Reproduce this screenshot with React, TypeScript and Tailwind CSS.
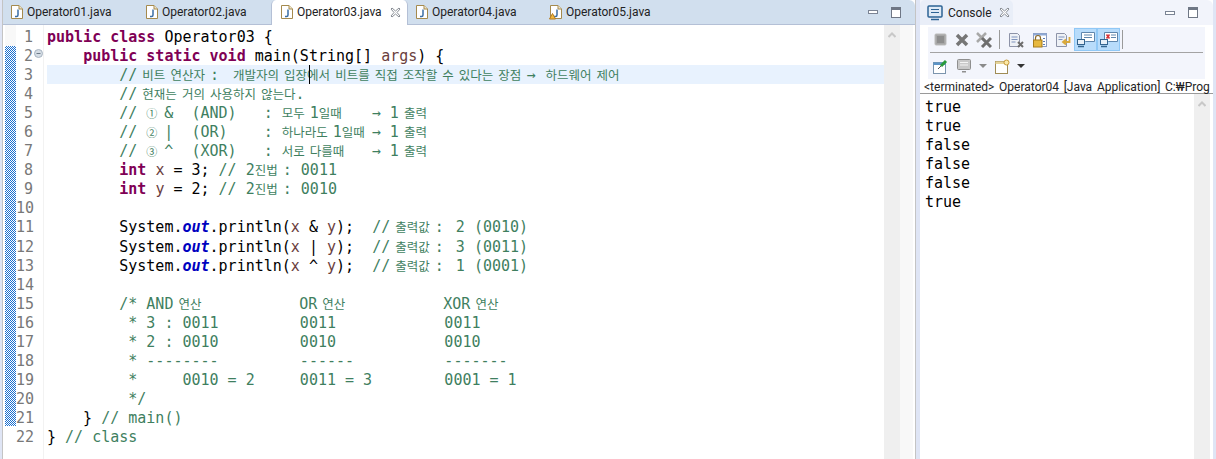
import React from 'react';

const KW = 'font-bold text-[#7f0055]';
const CM = 'text-[#3f7f5f]';
const VAR = 'text-[#6a3e3e]';
const OUT = 'font-bold italic text-[#0000c0]';
const TXT = 'text-[#000000]';
const NUM = 'text-[#3f7f5f] inline-block w-[9px] text-[11px]';
const DESC = 'text-[#3f7f5f] inline-block ml-[9px] w-[90px]';
const VAL = 'text-[#3f7f5f] ml-[3px]';

type Seg = [string, string];

const lines: Seg[][] = [
    [['public class', KW], [' Operator03 {', TXT]],
    [['    ', TXT], ['public static void', KW], [' main(String[] ', TXT], ['args', VAR], [') {', TXT]],
    [['        // 비트 연산자 :  개발자의 입장에서 비트를 직접 조작할 수 있다는 장점 →  하드웨어 제어', CM]],
    [['        // 현재는 거의 사용하지 않는다.', CM]],
    [['        // ', CM], ['①', NUM], [' &  (AND)   :', CM], ['모두 1일때', DESC], ['→ 1 출력', CM]],
    [['        // ', CM], ['②', NUM], [' |  (OR)    :', CM], ['하나라도 1일때', DESC], ['→ 1 출력', CM]],
    [['        // ', CM], ['③', NUM], [' ^  (XOR)   :', CM], ['서로 다를때', DESC], ['→ 1 출력', CM]],
    [['        ', TXT], ['int', KW], [' ', TXT], ['x', VAR], [' = 3; ', TXT], ['// 2진법 : 0011', CM]],
    [['        ', TXT], ['int', KW], [' ', TXT], ['y', VAR], [' = 2; ', TXT], ['// 2진법 : 0010', CM]],
    [],
    [['        System.', TXT], ['out', OUT], ['.println(', TXT], ['x', VAR], [' & ', TXT], ['y', VAR], [');  ', TXT], ['// 출력값 :', CM], [' 2 (0010)', VAL]],
    [['        System.', TXT], ['out', OUT], ['.println(', TXT], ['x', VAR], [' | ', TXT], ['y', VAR], [');  ', TXT], ['// 출력값 :', CM], [' 3 (0011)', VAL]],
    [['        System.', TXT], ['out', OUT], ['.println(', TXT], ['x', VAR], [' ^ ', TXT], ['y', VAR], [');  ', TXT], ['// 출력값 :', CM], [' 1 (0001)', VAL]],
    [],
    [['        ', TXT], ['/* AND 연산', 'text-[#3f7f5f] inline-block w-[180px]'], ['OR 연산', 'text-[#3f7f5f] inline-block w-[144px]'], ['XOR 연산', CM]],
    [['         * 3 : 0011         0011            0011', CM]],
    [['         * 2 : 0010         0010            0010', CM]],
    [['         * --------         ------          -------', CM]],
    [['         *     0010 = 2     0011 = 3        0001 = 1', CM]],
    [['         */', CM]],
    [['    } ', TXT], ['// main()', CM]],
    [['} ', TXT], ['// class', CM]],
];

const HANGUL = /[\uac00-\ud7a3]/;
// spaces next to hangul are narrow in the fallback font
const NARROW = /((?<=[\uac00-\ud7a3]) |(?<=→) (?= )| (?=[\uac00-\ud7a3]))/;

const Hangul: React.FC<{ text: string }> = ({ text }) => {
    const parts = HANGUL.test(text) ? text.split(NARROW) : [text];
    return (
        <>
            {parts.map((part, i) =>
                i % 2 === 1 ? (
                    <span key={i} className="tracking-[-4px]">{part}</span>
                ) : (
                    part.split(/([\uac00-\ud7a3]+)/).map((run, j) =>
                        j % 2 === 1 ? (
                            <span key={j} className="text-[12.5px]">{run}</span>
                        ) : (
                            <span key={j}>{run}</span>
                        ),
                    )
                ),
            )}
        </>
    );
};

const JavaFile: React.FC<{ warn?: boolean }> = ({ warn }) => (
    <svg width="14" height="16" viewBox="0 0 14 16" className="shrink-0">
        <path d="M1.5 1.5h7.5l3.500 3.500v9.500h-11z" fill="#fff" stroke="#a58a4e" />
        <path d="M9 1.500v3.500h3.500" fill="#f1e7c8" stroke="#a58a4e" />
        <path d="M8 5.500v5.500q0 1.500-1.500 1.500h-1.500" fill="none" stroke="#3a6ea5" strokeWidth="1.500" />
        {warn && <path d="M3.500 9.500l3 5.500h-6z" fill="#f0b840" stroke="#b57b1e" />}
    </svg>
);

const CloseX: React.FC = () => (
    <svg width="11" height="11" viewBox="0 0 11 11" className="shrink-0">
        <path d="M1 2l1-1 3.500 3 3.500-3 1 1-3 3.500 3 3.500-1 1-3.500-3-3.500 3-1-1 3-3.500z" fill="#fff" stroke="#8a8f96" />
    </svg>
);

const WindowControls: React.FC = () => (
    <div className="flex items-center gap-[13px]">
        <div className="h-[4px] w-[10px] border border-[#7b8494] bg-white" />
        <div className="h-[11px] w-[10px] border border-[#6f7785] border-t-[3px] bg-white" />
    </div>
);

const EditorTab: React.FC<{ name: string; width: string; warn?: boolean }> = ({ name, width, warn }) => (
    <div className={`flex items-center gap-[3px] pl-[7px] ${width}`}>
        <JavaFile warn={warn} />
        <span className="text-[12px] text-[#222]">{name}</span>
    </div>
);

const Chevron: React.FC = () => (
    <svg width="8" height="6" viewBox="0 0 8 6">
        <path d="M0.500 5l3.500-3.500 3.500 3.500" fill="none" stroke="#c8c8c8" strokeWidth="2" />
    </svg>
);

const Tool: React.FC<{ children: React.ReactNode; width: string; on?: boolean }> = ({ children, width, on }) => (
    <div className={`flex h-[23px] items-center justify-center ${width} ${on ? 'border border-[#90c8f6] bg-[#b8dcfb]' : ''}`}>
        {children}
    </div>
);

const Divider: React.FC<{ className: string }> = ({ className }) => <div className={`h-[19px] w-[1px] bg-[#9a9a9a] ${className}`} />;

const StopIcon = () => (
    <svg width="13" height="13" viewBox="0 0 13 13"><rect x="1" y="1" width="11" height="11" rx="1" fill="#a6a6a6" stroke="#bdbdbd" /><rect x="3" y="3" width="7" height="7" fill="#8e8e8e" /></svg>
);
const GreyX = () => (
    <svg width="14" height="14" viewBox="0 0 14 14"><path d="M2 2l10 10M12 2l-10 10" stroke="#767676" strokeWidth="3.500" /></svg>
);
const GreyXX = () => (
    <svg width="16" height="16" viewBox="0 0 16 16">
        <path d="M1 1l9 9M10 1l-9 9" stroke="#a8a8a8" strokeWidth="2.500" />
        <path d="M6 6l9 9M15 6l-9 9" stroke="#6f6f6f" strokeWidth="3" />
    </svg>
);
const DocX = () => (
    <svg width="16" height="16" viewBox="0 0 16 16">
        <path d="M1.500 1.500h8l2 2v11h-10z" fill="#eef1f6" stroke="#8d93a8" />
        <path d="M3.500 5h6M3.500 7.500h6M3.500 10h4" stroke="#7f93bd" />
        <path d="M10 10l5 5M15 10l-5 5" stroke="#6d6d6d" strokeWidth="2" />
    </svg>
);
const LockPanel = () => (
    <svg width="16" height="16" viewBox="0 0 16 16">
        <rect x="1.500" y="1.500" width="13" height="13" fill="#fff" stroke="#8b9cc0" />
        <rect x="1.500" y="1.500" width="13" height="2" fill="#8fa9d6" />
        <path d="M12 6v1M12 9v1M12 12v1" stroke="#5a7bb5" strokeWidth="2" />
        <path d="M3.500 8v-2a2.500 2.500 0 015 0v2" fill="none" stroke="#8a6a2a" strokeWidth="1.200" />
        <rect x="1.500" y="8" width="8.500" height="7" fill="#e7b83f" stroke="#a67c1c" />
    </svg>
);
const DocArrow = () => (
    <svg width="16" height="16" viewBox="0 0 16 16">
        <path d="M1.500 1.500h8l2 2v11h-10z" fill="#eef1f6" stroke="#8d93a8" />
        <path d="M3.500 5h6M3.500 7.500h4" stroke="#7f93bd" />
        <path d="M14.500 5v5h-6M11 7.500l-3 2.500 3 2.500" fill="none" stroke="#d9a93b" strokeWidth="1.800" />
    </svg>
);
const MonitorMsg: React.FC<{ red?: boolean }> = ({ red }) => (
    <svg width="18" height="17" viewBox="0 0 18 17">
        <path d="M4.500 9.500v-8h13v9h-9z" fill="#fff" stroke="#5f86ad" />
        {red ? (
            <path d="M6.500 3.500l3 4M9.500 3.500l-3 4" stroke="#d8353b" strokeWidth="1.600" />
        ) : (
            <path d="M7 4h8M7 6.500h8" stroke="#5f86ad" />
        )}
        {red && <path d="M11 4h5M11 6.500h5" stroke="#5f86ad" />}
        <rect x="0.500" y="8.500" width="7" height="5" fill="#e8f0f8" stroke="#33648f" />
        <path d="M1 15.500h6" stroke="#33648f" strokeWidth="1.500" />
    </svg>
);
const PinWindow = () => (
    <svg width="15" height="15" viewBox="0 0 15 15">
        <rect x="0.500" y="3.500" width="12" height="11" fill="#fff" stroke="#7b94ad" />
        <rect x="0.500" y="3.500" width="12" height="2.500" fill="#5d95c8" />
        <path d="M8 7l5-5" stroke="#2a9a3a" strokeWidth="3" />
        <path d="M5 10l3-3" stroke="#555" />
    </svg>
);
const MonitorGrey = () => (
    <svg width="14" height="15" viewBox="0 0 14 15">
        <rect x="0.500" y="0.500" width="13" height="10" rx="1" fill="#c9c9c9" stroke="#8f8f8f" />
        <path d="M3 3.500h8M3 6h8" stroke="#f4f4f4" />
        <path d="M5 12h4v1.500h-4z" fill="#8f8f8f" />
    </svg>
);
const NewWindow = () => (
    <svg width="15" height="15" viewBox="0 0 15 15">
        <rect x="0.500" y="2.500" width="12" height="12" fill="#fff" stroke="#a08c55" />
        <rect x="0.500" y="2.500" width="12" height="2.500" fill="#e6d49a" />
        <circle cx="11.500" cy="3.500" r="2.500" fill="#fbe9a8" stroke="#c79a3a" />
    </svg>
);
const Caret: React.FC<{ color: string }> = ({ color }) => (
    <svg width="8" height="4" viewBox="0 0 8 4"><path d="M0 0h8l-4 4z" fill={color} /></svg>
);
const ConsoleIcon = () => (
    <svg width="16" height="16" viewBox="0 0 16 16">
        <rect x="1" y="1" width="14" height="11" rx="1" fill="#dfeaf6" stroke="#2d6394" strokeWidth="1.500" />
        <path d="M4 4.500h8M4 7.500h8" stroke="#2d6394" />
        <path d="M4 14.500h8" stroke="#2d6394" strokeWidth="1.500" />
    </svg>
);

const App: React.FC = () => {
    return (
        <div className="flex h-[459px] w-[1216px] overflow-hidden bg-[#dfe5f5] pl-[2px] pr-[3px] font-['Roboto','Noto_Sans_CJK_KR',sans-serif]">
            {/* Editor */}
            <div className="flex w-[914px] flex-col border-x border-[#c4c4c4] bg-white">
                <div className="flex h-[25px] shrink-0 items-center rounded-tr-[6px] border-b border-[#b4c0d6] bg-[#d1dfee] pr-[14px]">
                    <EditorTab name="Operator01.java" width="w-[135px]" />
                    <EditorTab name="Operator02.java" width="w-[133px]" />
                    <div className="flex h-[25px] w-[137px] items-center gap-[3px] rounded-t-[5px] border-x border-[#b4c0d6] bg-white pl-[8px]">
                        <JavaFile />
                        <span className="text-[12px] text-[#222]">Operator03.java</span>
                        <div className="ml-[5px]"><CloseX /></div>
                    </div>
                    <EditorTab name="Operator04.java" width="w-[134px]" />
                    <EditorTab name="Operator05.java" width="w-[134px]" warn />
                    <div className="ml-auto"><WindowControls /></div>
                </div>
                <div className="flex min-h-0 flex-1">
                    {/* Quick diff ruler */}
                    <div className="w-[13px] shrink-0 pl-[2px]">
                        <div className="h-[21px] bg-[#f8f8f8]" />
                        <div className="h-[380px] bg-[repeating-conic-gradient(#1a6fd0_0%_25%,#ffffff_0%_50%)] bg-[length:2px_2px]" />
                    </div>
                    {/* Line numbers */}
                    <div className="w-[17px] shrink-0 pt-[3px] text-right font-['DejaVu_Sans_Mono',monospace] text-[15px] leading-[19.05px] text-[#787878]">
                        {lines.map((_, i) => (
                            <div key={i} className="whitespace-pre">{i + 1}</div>
                        ))}
                    </div>
                    <div className="w-[11px] shrink-0 border-r border-[#f2f2f2] pt-[24px] pl-[1px]">
                        <svg width="9" height="9" viewBox="0 0 9 9">
                            <circle cx="4.500" cy="4.500" r="4" fill="#d5dde5" stroke="#a7b3c0" />
                            <path d="M2.500 4.500h4" stroke="#6d7a88" />
                        </svg>
                    </div>
                    {/* Code */}
                    <div className="min-w-0 flex-1 pt-[2px] pl-[3px] font-['DejaVu_Sans_Mono','Noto_Sans_CJK_KR',monospace] text-[15px] leading-[19.05px]">
                        {lines.map((segs, i) => (
                            <div key={i} className={`relative h-[19.05px] whitespace-pre pt-[1px] ${i === 2 ? 'bg-[#e8f2fe]' : ''}`}>
                                {segs.map(([text, cls], j) => (
                                    <span key={j} className={cls}><Hangul text={text} /></span>
                                ))}
                                {i === 2 && <div className="absolute top-0 left-[262px] h-[19px] w-[1px] bg-black" />}
                            </div>
                        ))}
                    </div>
                    {/* Overview ruler + scroll */}
                    <div className="flex w-[16px] shrink-0 justify-center bg-[#efefef] pt-[7px]">
                        <Chevron />
                    </div>
                    <div className="w-[13px] shrink-0 bg-[#f8f8f8]" />
                    <div className="w-[2px] shrink-0" />
                </div>
            </div>
            {/* Sash */}
            <div className="w-[4px] shrink-0" />
            {/* Console */}
            <div className="flex min-w-0 flex-1 flex-col bg-white">
                <div className="flex h-[25px] shrink-0 items-center rounded-tr-[6px] bg-[#f2f4fb] pr-[15px]">
                    <div className="flex h-[25px] w-[93px] items-center gap-[5px] rounded-t-[5px] bg-[#e9eef8] pl-[7px]">
                        <ConsoleIcon />
                        <span className="text-[12px] text-[#222]">Console</span>
                        <div className="ml-[2px]"><CloseX /></div>
                    </div>
                    <div className="ml-auto"><WindowControls /></div>
                </div>
                <div className="mx-[8px] mt-[2px] w-[277px] bg-[#f3f5fc]">
                    <div className="flex h-[25px] items-center pl-[1px]">
                        <Tool width="w-[22px]"><StopIcon /></Tool>
                        <Tool width="w-[22px]"><GreyX /></Tool>
                        <Tool width="w-[22px]"><GreyXX /></Tool>
                        <Divider className="ml-[4px] mr-[4px]" />
                        <Tool width="w-[24px]"><DocX /></Tool>
                        <Tool width="w-[23px]"><LockPanel /></Tool>
                        <Tool width="w-[23px]"><DocArrow /></Tool>
                        <Tool width="w-[23px]" on><MonitorMsg /></Tool>
                        <Tool width="w-[23px]" on><MonitorMsg red /></Tool>
                        <Divider className="ml-[2px]" />
                    </div>
                    <div className="mx-[2px] h-[1px] w-[273px] bg-[#a3a3a3]" />
                    <div className="flex h-[26px] items-center gap-[8px] pl-[5px]">
                        <PinWindow />
                        <div className="ml-[1px]"><MonitorGrey /></div>
                        <Caret color="#8a8a8a" />
                        <NewWindow />
                        <div className="-ml-[1px]"><Caret color="#333" /></div>
                    </div>
                </div>
                <div className="h-[15px] shrink-0 whitespace-pre border-b border-[#9a9a9a] pl-[4px] text-[12px] leading-[16px] text-[#222] [word-spacing:1.75px]">
                    {'<terminated> Operator04 [Java Application] C:₩Prog'}
                </div>
                <div className="flex min-h-0 flex-1">
                    <div className="flex-1 pt-[4px] pl-[5px] font-['DejaVu_Sans_Mono',monospace] text-[15px] leading-[19px] text-black">
                        {['true', 'true', 'false', 'false', 'false', 'true'].map((v, i) => (
                            <div key={i}>{v}</div>
                        ))}
                    </div>
                    <div className="mr-[3px] flex w-[16px] justify-center bg-[#efefef] pt-[7px]">
                        <Chevron />
                    </div>
                </div>
            </div>
        </div>
    );
};

export default App;
